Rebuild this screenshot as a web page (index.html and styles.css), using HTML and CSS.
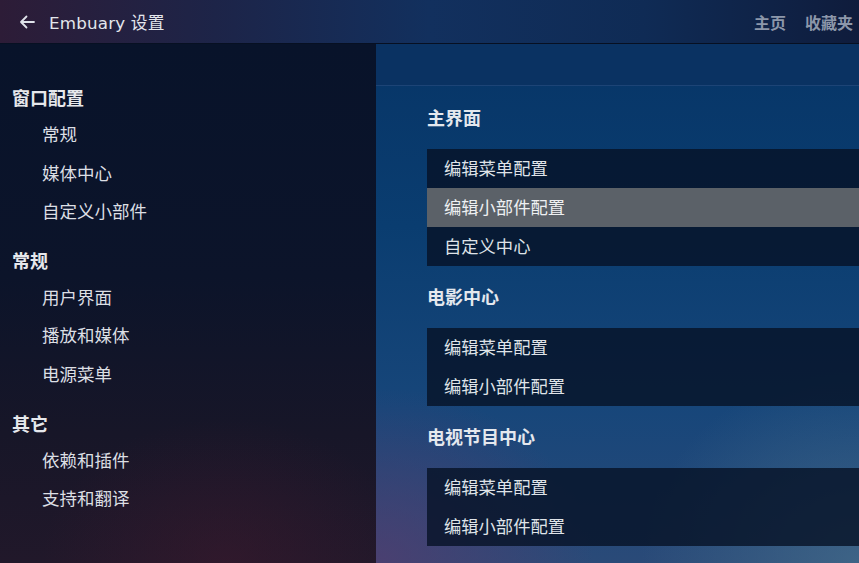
FILE: index.html
```html
<!DOCTYPE html>
<html lang="zh-CN">
<head>
<meta charset="utf-8">
<title>Embuary 设置</title>
<link rel="stylesheet" href="styles.css">
</head>
<body>
<div class="app">
  <header class="topbar">
    <div class="title-group">
      <svg class="back" width="16" height="14" viewBox="0 0 16 14" aria-hidden="true">
        <path d="M15 7H2M7.5 1.5L2 7l5.5 5.5" fill="none" stroke="#dfe3ea" stroke-width="1.8" stroke-linecap="round" stroke-linejoin="round"/>
      </svg>
      <span class="title">Embuary 设置</span>
    </div>
    <nav class="toplinks">
      <span>主页</span>
      <span>收藏夹</span>
    </nav>
  </header>
  <div class="body">
    <aside class="sidebar">
      <div class="group">
        <div class="group-title">窗口配置</div>
        <div class="nav-item">常规</div>
        <div class="nav-item">媒体中心</div>
        <div class="nav-item">自定义小部件</div>
      </div>
      <div class="group">
        <div class="group-title">常规</div>
        <div class="nav-item">用户界面</div>
        <div class="nav-item">播放和媒体</div>
        <div class="nav-item">电源菜单</div>
      </div>
      <div class="group">
        <div class="group-title">其它</div>
        <div class="nav-item">依赖和插件</div>
        <div class="nav-item">支持和翻译</div>
      </div>
    </aside>
    <main class="content">
      <div class="content-strip"></div>
      <div class="sections">
        <section class="section">
          <h2 class="section-title">主界面</h2>
          <div class="card">
            <div class="row">编辑菜单配置</div>
            <div class="row focused">编辑小部件配置</div>
            <div class="row">自定义中心</div>
          </div>
        </section>
        <section class="section">
          <h2 class="section-title">电影中心</h2>
          <div class="card">
            <div class="row">编辑菜单配置</div>
            <div class="row">编辑小部件配置</div>
          </div>
        </section>
        <section class="section">
          <h2 class="section-title">电视节目中心</h2>
          <div class="card">
            <div class="row">编辑菜单配置</div>
            <div class="row">编辑小部件配置</div>
          </div>
        </section>
      </div>
    </main>
  </div>
</div>
</body>
</html>
```

FILE: styles.css
```css
* { box-sizing: border-box; }
html, body { margin: 0; padding: 0; }
body {
  width: 859px;
  height: 563px;
  overflow: hidden;
  font-family: "DejaVu Sans", "Noto Sans CJK SC", sans-serif;
  color: #dfe3e8;
  background: #0a1a33;
}
.app {
  width: 859px;
  height: 563px;
  display: flex;
  flex-direction: column;
}
.topbar {
  height: 44px;
  flex: 0 0 44px;
  display: flex;
  align-items: center;
  justify-content: space-between;
  background: linear-gradient(90deg, #2d1c37 0%, #1d2448 25%, #12305e 50%, #0f2b55 75%, #0f1c3c 100%);
  border-bottom: 1px solid #071022;
}
.title-group {
  display: flex;
  align-items: center;
  padding-left: 19px;
}
.back { display: block; }
.title {
  margin-left: 14px;
  font-size: 16.7px;
  color: #e3e6ec;
  letter-spacing: 0.2px;
}
.toplinks {
  display: flex;
  gap: 19px;
  padding-right: 6px;
  font-family: "Noto Sans CJK SC", sans-serif;
  font-weight: 700;
  font-size: 16px;
  color: #8c97aa;
}
.body {
  flex: 1;
  display: flex;
  min-height: 0;
}
.sidebar {
  width: 376px;
  flex: 0 0 376px;
  padding-top: 39px;
  background:
    radial-gradient(ellipse 70% 40% at 60% 100%, rgba(60, 25, 45, 0.55), transparent 70%),
    linear-gradient(180deg, #08132a 0%, #0c142a 45%, #171628 75%, #21182a 100%);
  font-family: "Noto Sans CJK SC", sans-serif;
}
.group { margin-bottom: 15px; }
.group-title {
  height: 28px;
  line-height: 28px;
  padding-left: 12px;
  font-size: 18px;
  font-weight: 700;
  color: #e6e8ec;
  margin-bottom: 4px;
}
.nav-item {
  height: 38.6px;
  line-height: 38px;
  padding-left: 42px;
  font-size: 17.5px;
  color: #dcdfe4;
}
.content {
  flex: 1;
  min-width: 0;
  display: flex;
  flex-direction: column;
  background:
    radial-gradient(ellipse 60% 45% at 0% 100%, rgba(85, 60, 110, 0.75), transparent 75%),
    radial-gradient(ellipse 60% 50% at 100% 100%, rgba(70, 110, 140, 0.7), transparent 75%),
    linear-gradient(180deg, #073567 0%, #0a3d70 35%, #17467a 70%, #2a4a78 100%);
  font-family: "Noto Sans CJK SC", sans-serif;
}
.content-strip {
  height: 42px;
  flex: 0 0 42px;
  background: #0a3262;
  border-bottom: 1px solid #1d4476;
}
.sections {
  padding-left: 51px;
  padding-top: 16px;
}
.section-title {
  margin: 0 0 16px 0;
  height: 31px;
  line-height: 31px;
  font-size: 18px;
  font-weight: 700;
  color: #e4e8ee;
}
.card {
  background: rgba(6, 18, 38, 0.8);
  margin-bottom: 15px;
}
.row {
  height: 39px;
  line-height: 38px;
  padding-left: 17px;
  font-size: 17.3px;
  color: #dfe3e8;
}
.row.focused {
  background: #5b6168;
  color: #eef0f2;
}
```
